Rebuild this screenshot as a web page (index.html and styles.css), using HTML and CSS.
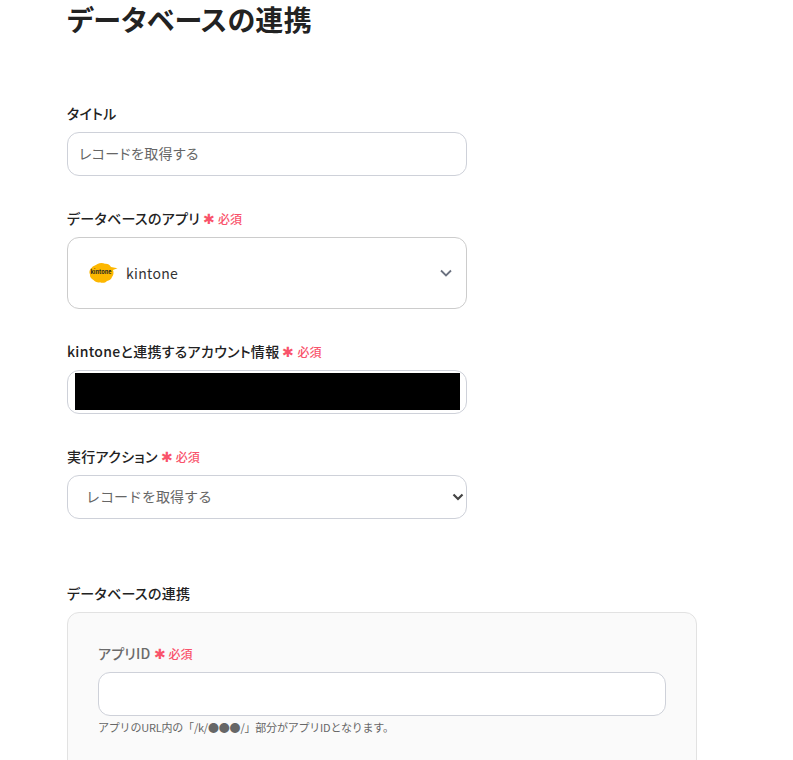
FILE: index.html
```html
<!DOCTYPE html>
<html lang="ja">
<head>
  <meta charset="UTF-8" />
  <title>データベースの連携</title>
  <link rel="stylesheet" href="styles.css">
</head>
<body>
  <main class="page">
    <h1 class="page-title">データベースの連携</h1>

    <div class="field field-first">
      <label class="label">タイトル</label>
      <input class="input title-input" type="text" value="レコードを取得する" />
    </div>

    <div class="field">
      <label class="label">データベースのアプリ<span class="required"><span class="mark">✱</span>必須</span></label>
      <div class="app-select">
        <svg class="app-logo" width="30" height="22" viewBox="0 0 30 22">
          <path d="M3.500 6C5 3.500 7.500 4 9.500 2C12 .5 15 .6 17 1.800C19.500 1.500 21.500 2.500 23 5L29.500 6.200L25 8C26 11 25.500 13 24 15C23.500 17.500 21 18.500 19 19C17.500 21 14 21.300 12 20.300C10 21 7 20 5.500 18C3.500 17 1.500 15 2 12.500C.8 10 1.500 7.500 3.500 6Z" fill="#fdb700" />
          <text class="logo-text" x="13" y="12" text-anchor="middle">kintone</text>
        </svg>
        <span class="app-name">kintone</span>
        <svg class="app-arrow" width="14" height="14" viewBox="0 0 14 14">
          <path d="M2 4.500L7 9.500L12 4.500" fill="none" stroke="#6b7280" stroke-width="1.800" />
        </svg>
      </div>
    </div>

    <div class="field">
      <label class="label">kintoneと連携するアカウント情報<span class="required"><span class="mark">✱</span>必須</span></label>
      <div class="input account">
        <div class="redacted"></div>
      </div>
    </div>

    <div class="field">
      <label class="label">実行アクション<span class="required"><span class="mark">✱</span>必須</span></label>
      <div class="select-wrap">
        <select class="input action-select">
          <option>レコードを取得する</option>
        </select>
        <svg class="select-arrow" width="12" height="8" viewBox="0 0 12 8">
          <path d="M1.500 1.500L6 6L10.500 1.500" fill="none" stroke="#444" stroke-width="2.200" />
        </svg>
      </div>
    </div>

    <section class="connect">
      <h2 class="label">データベースの連携</h2>
      <div class="panel">
        <label class="label label-muted">アプリID<span class="required"><span class="mark">✱</span>必須</span></label>
        <input class="input input-wide" type="text" />
        <p class="hint">アプリのURL内の「/k/●●●/」部分がアプリIDとなります。</p>
      </div>
    </section>
  </main>
</body>
</html>
```

FILE: styles.css
```css
* {
  margin: 0;
  padding: 0;
  box-sizing: border-box;
  font-family: "Noto Sans CJK JP", "Noto Sans", sans-serif;
  font-feature-settings: "palt";
}

html, body {
  height: 760px;
  overflow: hidden;
  background-color: #fff;
  color: #222;
}

.page {
  padding-left: 67px;
}

.page-title {
  font-size: 28px;
  font-weight: 700;
  line-height: 39px;
  letter-spacing: 0.3px;
  color: #222;
}

.field {
  margin-top: 32px;
  width: 400px;
}

.field-first {
  margin-top: 64px;
}

.label {
  display: block;
  font-size: 14px;
  font-weight: 500;
  line-height: 20px;
  letter-spacing: 0.3px;
  margin-bottom: 9px;
  color: #222;
}

.label-muted {
  letter-spacing: 0.2px;
  color: #6b6b6b;
}

.required {
  margin-left: 3px;
  font-size: 12px;
  font-weight: 500;
  line-height: 1;
  letter-spacing: 0;
  color: #f9536b;
}

.mark {
  margin-right: 3px;
  font-size: 14px;
  line-height: 1;
}

.input {
  display: block;
  width: 100%;
  height: 44px;
  padding: 0 11px 3px;
  border: 1px solid #ced1d9;
  border-radius: 12px;
  background-color: #fff;
  font-size: 14px;
  color: #666;
  outline: none;
}

.title-input {
  letter-spacing: 0.35px;
}

.app-select {
  display: flex;
  align-items: center;
  height: 72px;
  padding: 0 13px 0 20px;
  border: 1px solid #ccc;
  border-radius: 12px;
  font-size: 14px;
  color: #333;
}

.app-logo {
  flex: none;
}

.logo-text {
  font-size: 5.500px;
  font-weight: 700;
  fill: #222;
}

.app-name {
  margin-left: 8px;
  letter-spacing: 0.3px;
}

.app-arrow {
  margin-left: auto;
}

.account {
  padding: 2px 6px 0 7px;
}

.redacted {
  height: 37px;
  background-color: #000;
}

.select-wrap {
  position: relative;
}

.action-select {
  padding-left: 18px;
  font-feature-settings: normal;
  appearance: none;
}

.select-arrow {
  position: absolute;
  top: 18px;
  right: 3px;
}

.connect {
  margin-top: 64px;
}

.panel {
  width: 630px;
  height: 300px;
  padding: 30px;
  border: 1px solid #e2e2e2;
  border-radius: 12px;
  background-color: #fafafa;
}

.input-wide {
  width: 568px;
}

.hint {
  margin-top: 3px;
  font-size: 11px;
  line-height: 16px;
  letter-spacing: -0.2px;
  font-feature-settings: normal;
  color: #666;
}
```
